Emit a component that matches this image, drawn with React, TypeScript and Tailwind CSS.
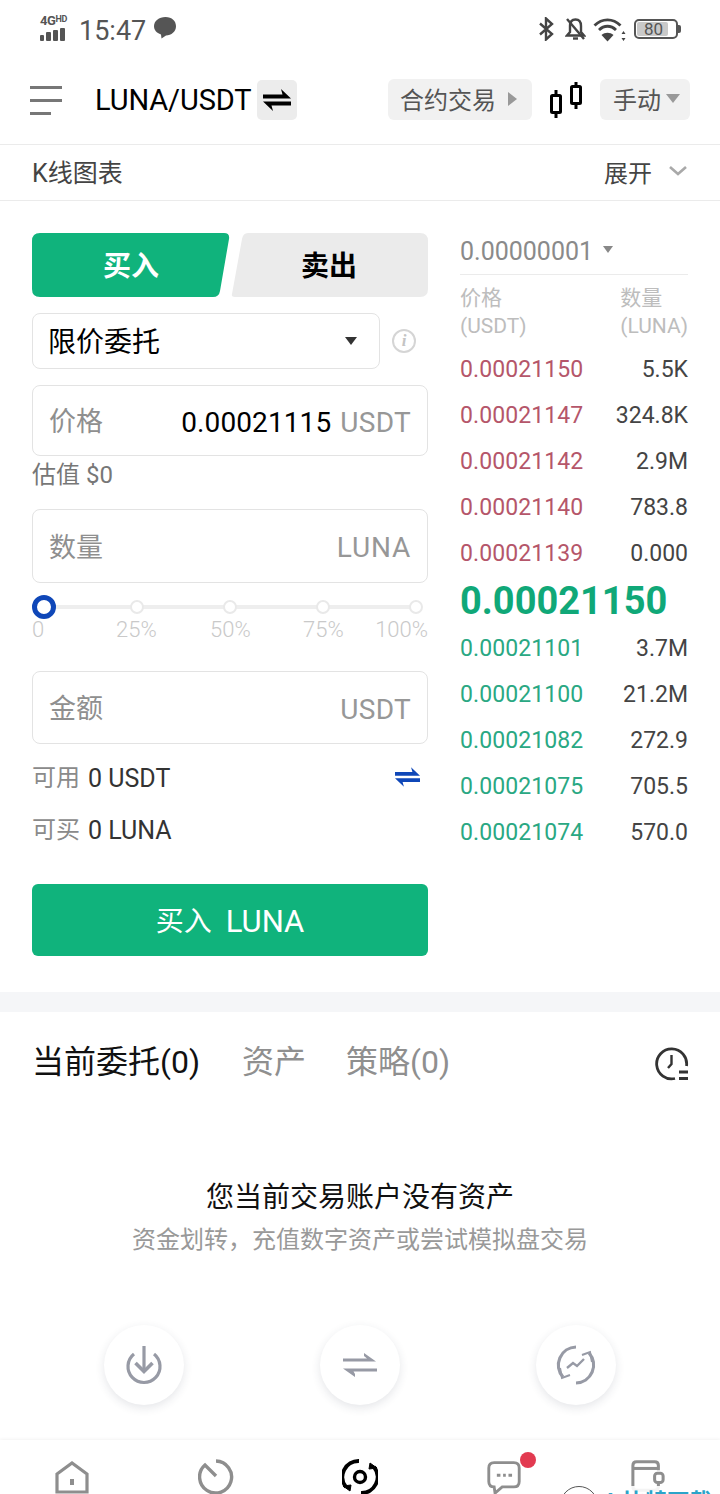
const font = "font-['Roboto','Noto_Sans_CJK_SC',sans-serif]"

const asks = [
  ["0.00021150", "5.5K"],
  ["0.00021147", "324.8K"],
  ["0.00021142", "2.9M"],
  ["0.00021140", "783.8"],
  ["0.00021139", "0.000"],
]
const bids = [
  ["0.00021101", "3.7M"],
  ["0.00021100", "21.2M"],
  ["0.00021082", "272.9"],
  ["0.00021075", "705.5"],
  ["0.00021074", "570.0"],
]

function SwapIcon({ className, w = 28, h = 24 }: { className?: string; w?: number; h?: number }) {
  return (
    <svg width={w} height={h} viewBox="0 0 28 24" className={className} fill="currentColor">
      <path d="M18 1l10 9.500H0V6.500h19.500z" />
      <path d="M10 23L0 13.500h28v4H8.500z" />
    </svg>
  )
}

function StatusBar() {
  return (
    <div className="h-[60px] pl-[40px] pr-[39px] flex items-start justify-between text-[#555]">
      <div className="flex items-center pt-[14px] h-[44px]">
        <div className="w-[31px] flex flex-col mr-[8px] mt-[-3px]">
          <span className="text-[13px] leading-[11px] font-bold tracking-[-0.4px] whitespace-nowrap">
            4G<span className="text-[9px] align-top leading-[9px]">HD</span>
          </span>
          <div className="flex items-end gap-[2px] mt-[2px]">
            <div className="w-[4px] h-[6px] bg-[#555] rounded-[1px]" />
            <div className="w-[5px] h-[9px] bg-[#555] rounded-[1px]" />
            <div className="w-[5px] h-[11px] bg-[#555] rounded-[1px]" />
            <div className="w-[5px] h-[13px] bg-[#555] rounded-[1px]" />
          </div>
        </div>
        <span className="text-[27px] leading-none text-[#555] mt-[4px]">15:47</span>
        <svg width="24" height="24" viewBox="0 0 24 24" className="ml-[7px] mt-[-3px]" fill="#555">
          <path d="M12.500 1C19 1 23 5 23 10.300c0 5.500-4.600 9-10 9.300L8.500 22.500 8 18.500C3.500 17 1 14 1 10.300 1 5 6 1 12.500 1z" />
        </svg>
      </div>
      <div className="flex items-center h-[44px] pt-[14px] gap-[7px]">
        <svg width="16" height="24" viewBox="0 0 16 24" fill="none" stroke="#444" strokeWidth="2.400">
          <path d="M2 6.500l12 10.500-6 5.500V1.500l6 5.500L2 17.500" />
        </svg>
        <svg width="21" height="24" viewBox="0 0 21 24" fill="none" stroke="#444" strokeWidth="2.400" className="ml-[4px]">
          <path d="M5 9c0-4 2-6.500 5.500-6.500S16 5 16 9v6l3 3.500H2L5 15z" />
          <path d="M8 21.500h5" />
          <path d="M2 2l17 20" />
        </svg>
        <svg width="33" height="26" viewBox="0 0 33 26" fill="none" stroke="#444" strokeWidth="2.800">
          <path d="M1.500 9.500C9 2 20 2 27.500 9.500" />
          <path d="M6 14c5-5 12-5 17 0" />
          <path d="M14.500 25.500L8.500 19c3.500-3 8.500-3 12 0z" fill="#444" stroke="none" />
          <path d="M30.500 15l2 3h-4zM30.500 25l-2-3h4z" fill="#444" stroke="none" />
        </svg>
        <div className="relative w-[44px] h-[20px] rounded-[5px] border-2 border-[#555] ml-[1px] overflow-hidden">
          <div className="absolute left-[1px] top-[1px] bottom-[1px] w-[31px] bg-[#c9c9c9] rounded-[2px]" />
          <span className="absolute inset-0 flex items-center justify-center text-[17px] leading-none text-[#555] pr-[5px]">80</span>
        </div>
        <div className="w-[3px] h-[8px] bg-[#555] rounded-r-[2px] ml-[-7px]" />
      </div>
    </div>
  )
}

function Header() {
  return (
    <div className="h-[85px] pl-[30px] pr-[30px] pb-[6px] flex items-center border-b border-[#ebebeb]">
      <div className="w-[32px] flex flex-col gap-[10px] mt-[3px]">
        <div className="h-[3px] w-[32px] bg-[#777]" />
        <div className="h-[3px] w-[32px] bg-[#777]" />
        <div className="h-[3px] w-[21px] bg-[#777]" />
      </div>
      <span className="ml-[33px] mt-[2px] text-[29px] leading-none tracking-[-0.1px] text-black">LUNA/USDT</span>
      <div className="ml-[5px] mt-[2px] w-[40px] h-[40px] rounded-[5px] bg-[#ececec] flex items-center justify-center text-black">
        <SwapIcon />
      </div>
      <div className="ml-auto w-[144px] h-[41px] bg-[#f1f1f1] rounded-[6px] flex items-center pl-[12px] pt-[4px] text-[#555] text-[24px]">
        合约交易
        <div className="ml-[12px] mt-[-4px] w-0 h-0 border-y-[7px] border-y-transparent border-l-[9px] border-l-[#999]" />
      </div>
      <svg width="32" height="36" viewBox="0 0 32 36" className="mx-[18px] mt-[1px]" fill="none" stroke="#000" strokeWidth="3">
        <rect x="1.500" y="13.500" width="9" height="17" rx="1" />
        <path d="M6 8v5M6 31v5" />
        <rect x="21.500" y="4.500" width="9" height="17" rx="1" />
        <path d="M26 0v4M26 22v5" />
      </svg>
      <div className="w-[90px] h-[41px] bg-[#f1f1f1] rounded-[6px] flex items-center pl-[13px] pt-[4px] text-[#555] text-[24px]">
        手动
        <div className="ml-[5px] mt-[-6px] w-0 h-0 border-x-[7px] border-x-transparent border-t-[9px] border-t-[#999]" />
      </div>
    </div>
  )
}

function Field({ label, unit, value, h }: { label: string; unit: string; value?: string; h: string }) {
  return (
    <div className={`${h} rounded-[8px] border border-[#e3e3e3] flex items-center pl-[16px] pr-[16px] pt-[4px] text-[28px] leading-none`}>
      <span className="text-[#8f8f8f] text-[27px]">{label}</span>
      {value && <span className="ml-auto text-black tracking-[0.1px]">{value}</span>}
      <span className={`${value ? "ml-[9px]" : "ml-auto"} text-[#979797] ${unit === "LUNA" ? "tracking-[0.8px]" : "tracking-[0.3px]"}`}>{unit}</span>
    </div>
  )
}

function Tick({ left }: { left: string }) {
  return <div className={`absolute ${left} top-[17px] w-[14px] h-[14px] rounded-full border-2 border-[#e9e9e9] bg-white`} />
}

function Slider() {
  const label = "absolute top-[35px] text-[22px] leading-[24px] text-[#c9c9c9] font-light"
  return (
    <div className="relative h-[88px]">
      <div className="absolute left-0 right-[12px] top-[22px] h-[4px] bg-[#eeeeee]" />
      <div className="absolute left-0 top-[12px] w-[24px] h-[24px] rounded-full border-[5px] border-[#0f47b8] bg-white" />
      <Tick left="left-[98px]" />
      <Tick left="left-[191px]" />
      <Tick left="left-[284px]" />
      <Tick left="left-[377px]" />
      <div className={`${label} left-0`}>0</div>
      <div className={`${label} left-[84px]`}>25%</div>
      <div className={`${label} left-[178px]`}>50%</div>
      <div className={`${label} left-[271px]`}>75%</div>
      <div className={`${label} right-0`}>100%</div>
    </div>
  )
}

function OrderForm() {
  return (
    <div className="w-[396px] flex flex-col">
      <div className="relative h-[64px] flex text-[28px] font-bold leading-none">
        <svg width="396" height="64" viewBox="0 0 396 64" className="absolute inset-0">
          <path d="M8 0H192q6 0 5 6l-9 52q-1 6-7 6H8q-8 0-8-8V8q0-8 8-8z" fill="#10b37c" />
          <path d="M216 0H388q8 0 8 8v48q0 8-8 8H203q-4 0-3-3l10-55q1-6 6-6z" fill="#ebebeb" />
        </svg>
        <div className="relative w-[198px] pt-[4px] flex items-center justify-center text-white">买入</div>
        <div className="relative flex-1 pt-[4px] flex items-center justify-center text-black">卖出</div>
      </div>
      <div className="mt-[16px] h-[56px] flex items-center">
        <div className="w-[348px] h-[56px] rounded-[8px] border border-[#e3e3e3] flex items-center pl-[15px] pr-[22px] pt-[4px] text-[28px] leading-none text-black">
          限价委托
          <div className="ml-auto mt-[-4px] w-0 h-0 border-x-[6px] border-x-transparent border-t-[8px] border-t-[#333]" />
        </div>
        <div className="ml-[12px] w-[24px] h-[24px] rounded-full border-2 border-[#d5d5d5] flex items-center justify-center text-[#c4c4c4] text-[17px] italic font-bold font-['Liberation_Serif',serif]">
          i
        </div>
      </div>
      <div className="mt-[16px]">
        <Field label="价格" unit="USDT" value="0.00021115" h="h-[71px]" />
      </div>
      <div className="h-[36px] mt-[1px] text-[24px] leading-[36px] text-[#777]">估值 $0</div>
      <div className="mt-[16px]">
        <Field label="数量" unit="LUNA" h="h-[74px]" />
      </div>
      <Slider />
      <Field label="金额" unit="USDT" h="h-[73px]" />
      <div className="h-[52px] mt-[7px] pt-[2px] flex items-center text-[24px] leading-none">
        <span className="text-[#8a8a8a]">可用</span>
        <span className="ml-[8px] text-[#333] text-[25px]">0 USDT</span>
        <SwapIcon className="ml-auto mr-[8px] mt-[-2px] text-[#0f47b8]" w={25} h={22} />
      </div>
      <div className="h-[52px] pt-[2px] flex items-center text-[24px] leading-none">
        <span className="text-[#8a8a8a]">可买</span>
        <span className="ml-[8px] text-[#333] text-[25px]">0 LUNA</span>
      </div>
      <button className="mt-[29px] h-[72px] pt-[3px] rounded-[6px] bg-[#10b37c] text-white text-[28px] leading-none flex items-center justify-center">
        买入<span className="ml-[14px] text-[31px]">LUNA</span>
      </button>
    </div>
  )
}

function Book({ rows, color }: { rows: string[][]; color: string }) {
  return (
    <div className={`flex flex-col text-[23px] leading-none ${color}`}>
      {rows.map(([price, qty]) => (
        <div key={price} className="h-[46px] flex items-center justify-between">
          <span className="tracking-[0.1px]">{price}</span>
          <span className="text-[#444]">{qty}</span>
        </div>
      ))}
    </div>
  )
}

function OrderBook() {
  return (
    <div className="w-[228px] flex flex-col">
      <div className="h-[42px] border-b border-[#ebebeb] flex items-start pt-[5px] text-[25px] leading-[28px] text-[#8a8a8a]">
        0.00000001
        <div className="ml-[10px] mt-[8px] w-0 h-0 border-x-[5px] border-x-transparent border-t-[7px] border-t-[#888]" />
      </div>
      <div className="mt-[9px] flex justify-between text-[#bdbdbd] text-[21px] leading-[28px]">
        <div>
          <div>价格</div>
          <div>(USDT)</div>
        </div>
        <div className="text-right">
          <div className="text-left">数量</div>
          <div>(LUNA)</div>
        </div>
      </div>
      <div className="mt-[6px]">
        <Book rows={asks} color="text-[#b5566a]" />
      </div>
      <div className="h-[49px] flex items-center text-[38px] leading-none font-bold text-[#10a878]">0.00021150</div>
      <Book rows={bids} color="text-[#2aa883]" />
    </div>
  )
}

function Circle({ children }: { children: React.ReactNode }) {
  return (
    <div className="w-[80px] h-[80px] rounded-full bg-white shadow-[0_3px_10px_rgba(40,50,70,0.12)] flex items-center justify-center">
      {children}
    </div>
  )
}

function Empty() {
  return (
    <div className="h-[428px] px-[32px] flex flex-col">
      <div className="h-[100px] flex items-center text-[32px] leading-none">
        <span className="text-[#111]">当前委托(0)</span>
        <span className="ml-[42px] text-[#8f8f8f]">资产</span>
        <span className="ml-[40px] text-[#8f8f8f]">策略(0)</span>
        <svg width="34" height="34" viewBox="0 0 34 34" className="ml-auto mr-[-1px] mt-[3px]" fill="none" stroke="#333" strokeWidth="2.800">
          <path d="M20 31.500A15 15 0 1 1 31.500 19" />
          <path d="M16.500 8v9l-3.500 4" strokeWidth="2.400" />
          <path d="M24 25h9M24 31.500h9" strokeWidth="2.800" />
        </svg>
      </div>
      <div className="mt-[68px] text-center text-[28px] leading-[36px] text-[#111]">您当前交易账户没有资产</div>
      <div className="mt-[6px] text-center text-[24px] leading-[36px] text-[#999]">资金划转，充值数字资产或尝试模拟盘交易</div>
      <div className="mt-[67px] flex justify-between px-[72px]">
        <Circle>
          <svg width="38" height="40" viewBox="0 0 38 40" fill="none" stroke="#979aa5" strokeWidth="3.200">
            <path d="M9 9A16 16 0 1 0 29 9" />
            <path d="M19 1v25" />
            <path d="M10.500 18l8.500 8.500 8.500-8.500" strokeWidth="3.600" />
          </svg>
        </Circle>
        <Circle>
          <svg width="36" height="28" viewBox="0 0 36 28" fill="#979aa5">
            <path d="M22 2l12 8.500H1V7.500h24L22 5z" />
            <path d="M13 26L1 17.500h34v3H11.500L13 23z" />
          </svg>
        </Circle>
        <Circle>
          <svg width="40" height="42" viewBox="0 0 40 42" fill="none" stroke="#979aa5" strokeWidth="3.200">
            <path d="M20 3A18 18 0 0 0 7 33" />
            <path d="M20 39A18 18 0 0 0 33 9" />
            <path d="M4 24l2 10 8-3" strokeWidth="2" />
            <path d="M36 18l-2-10-8 3" strokeWidth="2" />
            <path d="M11 24l6-5 4 3 7-7" strokeWidth="2.400" />
          </svg>
        </Circle>
      </div>
    </div>
  )
}

function BottomNav() {
  return (
    <div className="relative h-[54px] bg-white shadow-[0_-1px_3px_rgba(0,0,0,0.05)] overflow-hidden">
      <div className="grid grid-cols-5 pt-[19px] justify-items-center items-start">
        <svg width="36" height="36" viewBox="0 0 36 36" fill="none" stroke="#8e8e8e" strokeWidth="3.200" className="mt-[1px]">
          <path d="M3 14L18 3l15 11v18H3z" />
          <path d="M18 19v6" strokeWidth="4" />
        </svg>
        <svg width="36" height="36" viewBox="0 0 36 36" fill="none" stroke="#8e8e8e" strokeWidth="3.400">
          <path d="M18 2a16 16 0 1 1-11 4l11 11" />
        </svg>
        <svg width="36" height="36" viewBox="0 0 36 36" fill="none" stroke="#000" strokeWidth="3.800">
          <path d="M17 2A16 16 0 0 0 4 28" />
          <path d="M19 34A16 16 0 0 0 32 8" />
          <path d="M1 27l7 5 1-6z" fill="#000" strokeWidth="1" />
          <path d="M35 9l-7-5-1 6z" fill="#000" strokeWidth="1" />
          <circle cx="18" cy="18" r="5.500" strokeWidth="3.400" />
        </svg>
        <div className="relative mt-[1px]">
          <svg width="38" height="34" viewBox="0 0 38 38" fill="none" stroke="#8e8e8e" strokeWidth="3.200">
            <path d="M8 3h22q6 0 6 6v15q0 6-6 6H17l-8 7-1-7q-6 0-6-6V9q0-6 6-6z" />
            <path d="M11 17h4M18 17h3M24 17h4" strokeWidth="3.200" />
          </svg>
          <div className="absolute right-[-13px] top-[-8px] w-[16px] h-[16px] rounded-full bg-[#e23a50]" />
        </div>
        <svg width="38" height="34" viewBox="0 0 38 36" fill="none" stroke="#8e8e8e" strokeWidth="3.200">
          <path d="M30 12V7q0-4-4-4H7Q3 3 3 7v22q0 4 4 4h19q4 0 4-4v-3" />
          <path d="M3 10h27" />
          <rect x="26" y="15" width="9" height="10" rx="3" />
        </svg>
      </div>
      <div className="absolute left-[555px] right-0 top-[46px] h-[8px] bg-white/90 overflow-hidden">
        <div className="absolute left-[5px] top-0 w-[38px] h-[38px] rounded-full border border-[#555] bg-white" />
        <div className="absolute left-[48px] top-[4px] text-[22px] leading-[24px] font-bold text-[#2ba4c9] whitespace-nowrap">A 比特下载</div>
      </div>
    </div>
  )
}

export default function App() {
  return (
    <div className={`${font} w-[720px] h-[1494px] overflow-hidden bg-white flex flex-col`}>
      <StatusBar />
      <Header />
      <div className="h-[56px] pl-[32px] pr-[32px] pt-[2px] flex items-center border-b border-[#ebebeb] text-[25px] leading-none text-[#444]">
        K线图表
        <span className="ml-auto text-[24px]">展开</span>
        <svg width="18" height="12" viewBox="0 0 18 12" fill="none" stroke="#a9a9a9" strokeWidth="2.600" className="ml-[17px] mt-[-6px] mr-[1px]">
          <path d="M1 2l8 7 8-7" />
        </svg>
      </div>
      <div className="h-[791px] px-[32px] pt-[32px] flex justify-between">
        <OrderForm />
        <OrderBook />
      </div>
      <div className="h-[20px] bg-[#f5f6f8]" />
      <Empty />
      <BottomNav />
    </div>
  )
}
